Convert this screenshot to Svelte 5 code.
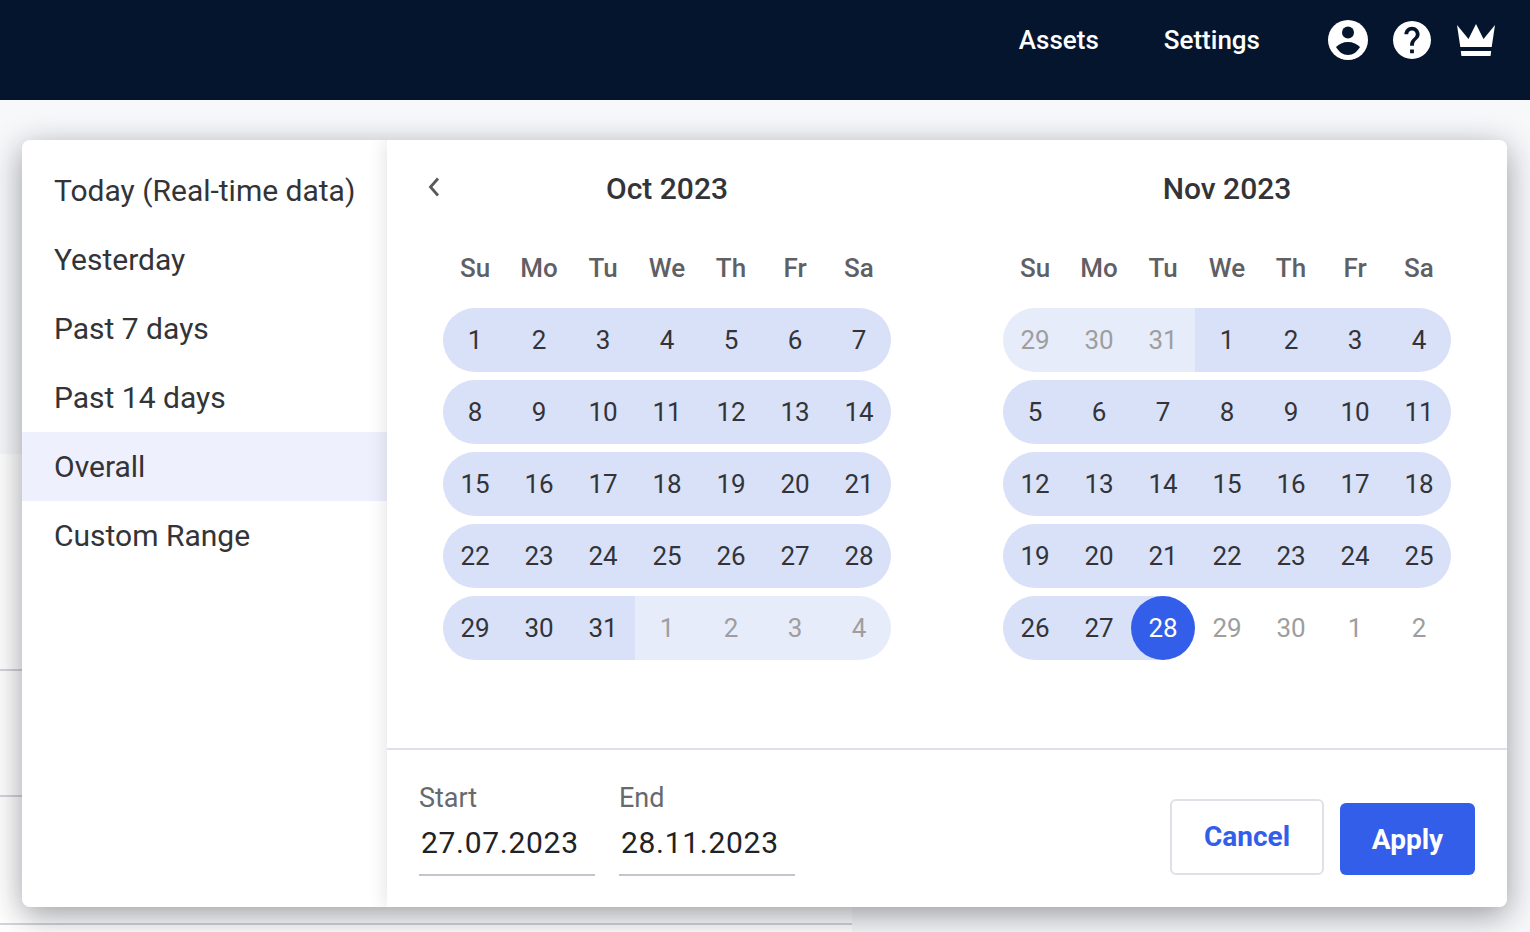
<script>
    const presets = ["Today (Real-time data)", "Yesterday", "Past 7 days", "Past 14 days", "Overall", "Custom Range"];
    const weekdays = ["Su", "Mo", "Tu", "We", "Th", "Fr", "Sa"];

    // kind: "in" = inside the range, "out" = other month inside the range,
    // "off" = other month past the range, "end" = last selected day
    function cells(from, to, kind) {
        let list = [];
        for (let d = from; d <= to; d++) list.push({ d, kind });
        return list;
    }

    function toRows(days) {
        let rows = [];
        for (let i = 0; i < days.length; i += 7) rows.push(days.slice(i, i + 7));
        return rows;
    }

    const months = [
        {
            title: "Oct 2023",
            rows: toRows([...cells(1, 31, "in"), ...cells(1, 4, "out")])
        },
        {
            title: "Nov 2023",
            rows: toRows([
                ...cells(29, 31, "out"),
                ...cells(1, 27, "in"),
                { d: 28, kind: "end" },
                ...cells(29, 30, "off"),
                ...cells(1, 2, "off")
            ])
        }
    ];
</script>

<div class="page">
    <header>
        <nav>
            <a href="#assets">Assets</a>
            <a href="#settings">Settings</a>
        </nav>
        <div class="icons">
            <svg class="user" viewBox="0 0 40 40" aria-label="Account">
                <circle cx="20" cy="20" r="20" fill="#fff" />
                <circle cx="20" cy="12.5" r="6" fill="#05152e" />
                <path d="M8 27C11 24 15 22 20 22C25 22 29 24 32 27C29 32 25 35 20 35C15 35 11 32 8 27Z" fill="#05152e" />
            </svg>
            <svg class="help" viewBox="2 2 20 20" aria-label="Help">
                <path fill="#fff" d="M12 2C6.48 2 2 6.48 2 12s4.48 10 10 10 10-4.48 10-10S17.52 2 12 2zm1 17h-2v-2h2v2zm2.07-7.75l-.9.92C13.45 12.9 13 13.5 13 15h-2v-.5c0-1.1.45-2.1 1.17-2.83l1.24-1.26c.37-.36.59-.86.59-1.41 0-1.1-.9-2-2-2s-2 .9-2 2H8c0-2.21 1.79-4 4-4s4 1.79 4 4c0 .88-.36 1.68-.93 2.25z" />
            </svg>
            <svg class="crown" viewBox="0 0 38 32" aria-label="Plan">
                <path fill="#fff" d="M0 1L11.5 15L19 0L26.5 15L38 1L34.7 23H3.3Z" />
                <path fill="#fff" d="M3.8 27H34.2L33.6 32H4.4Z" />
            </svg>
        </div>
    </header>

    <div class="backdrop">
        <div class="table">
            <div class="row r1"></div>
            <div class="row r2"></div>
            <div class="row r3"></div>
        </div>
    </div>

    <div class="popup">
        <ul class="presets">
            {#each presets as p}
                <li class:active={p === "Overall"}>{p}</li>
            {/each}
        </ul>

        <div class="main">
            <div class="calendars">
                <button class="prev" aria-label="Previous month">
                    <svg viewBox="0 0 16 24" width="16" height="24">
                        <path d="M12 3.5L4.5 12L12 20.5" fill="none" stroke="#58595d" stroke-width="2.8" />
                    </svg>
                </button>
                {#each months as month}
                    <div class="month">
                        <h2>{month.title}</h2>
                        <div class="week">
                            {#each weekdays as w}
                                <span>{w}</span>
                            {/each}
                        </div>
                        {#each month.rows as row}
                            <div class="days">
                                {#each row as c}
                                    <div class="day {c.kind}"><span>{c.d}</span></div>
                                {/each}
                            </div>
                        {/each}
                    </div>
                {/each}
            </div>

            <footer>
                <label>
                    <span>Start</span>
                    <input value="27.07.2023" />
                </label>
                <label>
                    <span>End</span>
                    <input value="28.11.2023" />
                </label>
                <div class="actions">
                    <button class="cancel">Cancel</button>
                    <button class="apply">Apply</button>
                </div>
            </footer>
        </div>
    </div>
</div>

<style>
    :global(body) {
        background: #f7f8fa;
        font-family: Roboto, "Liberation Sans", sans-serif;
    }

    .page {
        position: relative;
        height: 932px;
        overflow: hidden;
    }

    header {
        height: 100px;
        background: #05152e;
        display: flex;
        justify-content: flex-end;
        align-items: center;
        padding: 0 35px 20px 0;
        box-sizing: border-box;
    }

    nav {
        display: flex;
        gap: 65px;
        margin-right: 68px;
    }

    nav a {
        color: #fff;
        text-decoration: none;
        font-size: 26px;
        font-weight: 500;
    }

    .icons {
        display: flex;
        align-items: center;
        gap: 25px;
    }

    .user {
        width: 40px;
        height: 40px;
    }

    .help {
        width: 38px;
        height: 38px;
    }

    .crown {
        width: 38px;
        height: 32px;
        margin-left: 1px;
    }

    .backdrop {
        padding-top: 354px;
    }

    .table {
        width: 852px;
        height: 478px;
        background: #fff;
    }

    .row {
        border-bottom: 2px solid #d4d4da;
        box-sizing: border-box;
    }

    .r1 {
        height: 217px;
    }

    .r2 {
        height: 126px;
    }

    .r3 {
        height: 128px;
    }

    .popup {
        position: absolute;
        left: 22px;
        top: 140px;
        width: 1485px;
        height: 767px;
        display: flex;
        background: #fff;
        border-radius: 8px;
        box-shadow: 0 8px 32px rgba(20, 22, 30, 0.42);
        overflow: hidden;
    }

    .presets {
        width: 365px;
        flex: none;
        margin: 0;
        padding: 16px 0 0;
        list-style: none;
    }

    .presets li {
        height: 69px;
        line-height: 69px;
        padding-left: 32px;
        font-size: 30px;
        color: #333438;
        white-space: nowrap;
    }

    .presets li.active {
        background: #eef0fd;
    }

    .main {
        position: relative;
        flex: 1;
        display: flex;
        flex-direction: column;
        background: #fff;
        box-shadow: 0 0 18px rgba(20, 22, 30, 0.14);
    }

    .calendars {
        position: relative;
        flex: 1;
        display: flex;
        gap: 112px;
        padding: 0 56px;
    }

    .prev {
        position: absolute;
        left: 39px;
        top: 35px;
        width: 16px;
        height: 24px;
        padding: 0;
        border: none;
        background: none;
    }

    .month {
        width: 448px;
    }

    h2 {
        margin: 0;
        padding-top: 30px;
        height: 38px;
        line-height: 38px;
        text-align: center;
        font-size: 30px;
        font-weight: 500;
        color: #333438;
    }

    .week {
        display: grid;
        grid-template-columns: repeat(7, 64px);
        margin: 40px 0 20px;
        height: 40px;
        line-height: 40px;
        text-align: center;
        font-size: 26px;
        font-weight: 500;
        color: #5f6064;
    }

    .days {
        display: grid;
        grid-template-columns: repeat(7, 64px);
        height: 64px;
        margin-bottom: 8px;
        font-size: 26px;
        color: #333438;
    }

    .day {
        display: flex;
        align-items: center;
        justify-content: center;
    }

    .day:first-child {
        border-radius: 32px 0 0 32px;
    }

    .day:last-child {
        border-radius: 0 32px 32px 0;
    }

    .in {
        background: #d9e1f9;
    }

    .out {
        background: #e7ecfb;
        color: #9e9e9e;
    }

    .off {
        color: #9e9e9e;
    }

    .end {
        background: linear-gradient(90deg, #d9e1f9 50%, transparent 50%);
    }

    .end span {
        width: 64px;
        height: 64px;
        line-height: 64px;
        text-align: center;
        border-radius: 50%;
        background: #335eea;
        color: #fff;
    }

    footer {
        flex: none;
        height: 159px;
        box-sizing: border-box;
        border-top: 2px solid #e0e0e8;
        display: flex;
        gap: 24px;
        padding: 32px 32px 0;
    }

    label {
        display: flex;
        flex-direction: column;
        width: 176px;
    }

    label span {
        font-size: 27px;
        line-height: 32px;
        color: #666a70;
    }

    input {
        width: 100%;
        box-sizing: border-box;
        height: 52px;
        margin-top: 10px;
        padding: 0 0 13px 2px;
        border: none;
        border-bottom: 2px solid #c4c4cc;
        outline: none;
        background: none;
        font-family: inherit;
        font-size: 30px;
        letter-spacing: 0.7px;
        color: #212226;
    }

    .actions {
        margin-left: auto;
        display: flex;
        align-items: flex-end;
        gap: 16px;
        height: 93px;
    }

    .actions button {
        font-family: inherit;
        font-size: 28px;
        font-weight: 700;
        border-radius: 6px;
    }

    .cancel {
        width: 154px;
        height: 76px;
        padding: 0 0 2px;
        background: #fff;
        border: 2px solid #e0e0e6;
        color: #335eea;
    }

    .apply {
        width: 135px;
        height: 72px;
        border: none;
        background: #335eea;
        color: #fff;
    }
</style>
